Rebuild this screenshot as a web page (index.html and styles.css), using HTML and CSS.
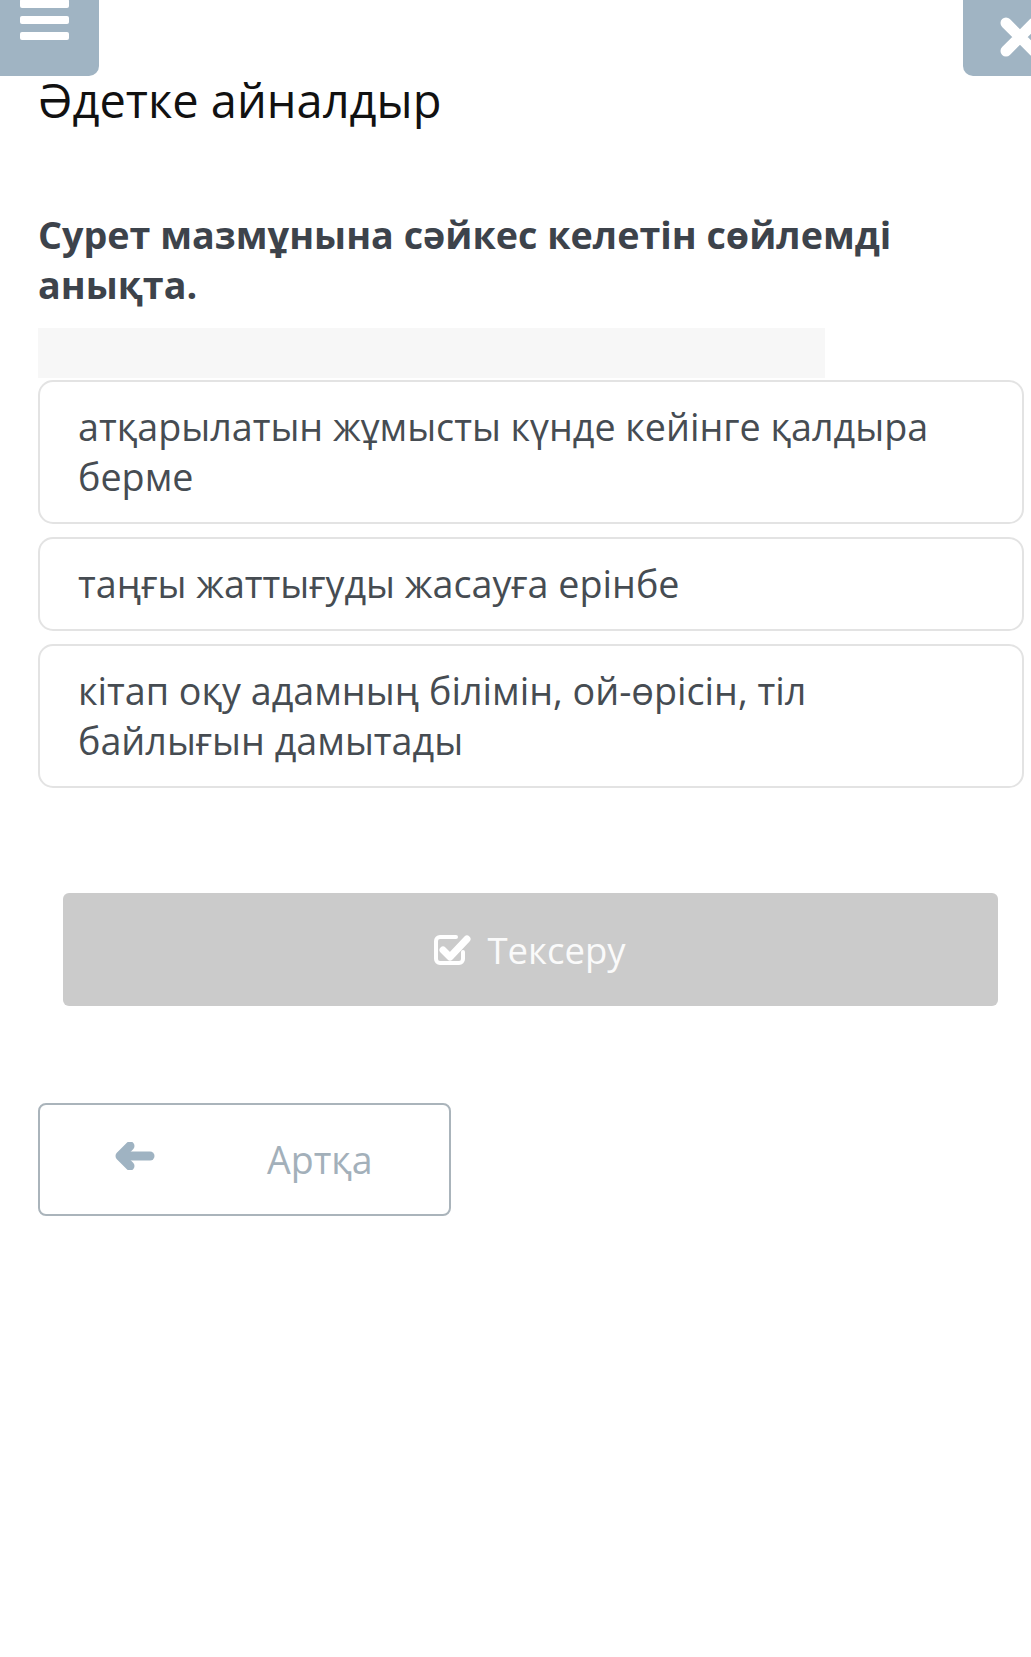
FILE: index.html
```html
<!DOCTYPE html>
<html>
<head>
  <meta charset="utf-8">
  <title>Әдетке айналдыр</title>
  <link rel="stylesheet" href="styles.css">
</head>
<body>
  <button class="menu-btn" aria-label="Мәзір">
    <span class="bar"></span>
    <span class="bar"></span>
    <span class="bar"></span>
  </button>
  <button class="close-btn" aria-label="Жабу">
    <svg width="44" height="44" viewBox="0 0 44 44">
      <path d="M8 7 L36 35 M8 35 L36 7" stroke="#fff" stroke-width="11" stroke-linecap="round"/>
    </svg>
  </button>

  <div class="page">
    <h1 class="title">Әдетке айналдыр</h1>

    <h2 class="question">Сурет мазмұнына сәйкес келетін сөйлемді анықта.</h2>

    <div class="placeholder"></div>

    <div class="options">
      <div class="option">атқарылатын жұмысты күнде кейінге қалдыра берме</div>
      <div class="option">таңғы жаттығуды жасауға ерінбе</div>
      <div class="option">кітап оқу адамның білімін, ой-өрісін, тіл байлығын дамытады</div>
    </div>

    <button class="check-btn">
      <svg width="38" height="34" viewBox="0 0 38 34">
        <path d="M30 19 v7 a4 4 0 0 1 -4 4 H7 a4 4 0 0 1 -4 -4 V8 a4 4 0 0 1 4 -4 h16" fill="none" stroke="#fff" stroke-width="4" stroke-linecap="round"/>
        <polyline points="10,17 17,24 34,6" fill="none" stroke="#fff" stroke-width="7" stroke-linecap="round" stroke-linejoin="round"/>
      </svg>
      <span>Тексеру</span>
    </button>

    <button class="back-btn">
      <svg width="40" height="28" viewBox="0 0 40 28">
        <polyline points="15,4 5,14 15,24" fill="none" stroke="#9fb3c2" stroke-width="9" stroke-linecap="round" stroke-linejoin="round"/>
        <line x1="6" y1="14" x2="35" y2="14" stroke="#9fb3c2" stroke-width="9" stroke-linecap="round"/>
      </svg>
      <span>Артқа</span>
    </button>
  </div>
</body>
</html>
```

FILE: styles.css
```css
* {
  box-sizing: border-box;
}
html, body {
  margin: 0;
  background: #fff;
  overflow-x: hidden;
}
body {
  font-family: "Open Sans", "Noto Sans", sans-serif;
  position: relative;
}
button {
  font-family: inherit;
  border: none;
  padding: 0;
  cursor: pointer;
}

/* floating nav buttons */
.menu-btn {
  position: absolute;
  top: 0;
  left: 0;
  width: 99px;
  height: 76px;
  background: #a0b4c3;
  border-radius: 0 0 10px 0;
  display: flex;
  flex-direction: column;
  align-items: flex-start;
  padding: 0 0 0 20px;
  gap: 8px;
}
.menu-btn .bar {
  display: block;
  width: 49px;
  height: 8px;
  background: #fff;
  border-radius: 2px;
}
.menu-btn .bar:first-child {
  height: 9px;
  margin-top: -1px;
}
.close-btn {
  position: absolute;
  top: 0;
  right: 0;
  width: 68px;
  height: 76px;
  background: #a0b4c3;
  border-radius: 0 0 0 10px;
  overflow: hidden;
  text-align: left;
}
.close-btn svg {
  display: block;
  margin: 0 0 0 35px;
}

.page {
  padding: 0 7px 0 38px;
}
.title {
  margin: 70px 0 0;
  font-size: 47px;
  line-height: 60px;
  font-weight: 400;
  color: #111;
}
.question {
  margin: 80px 0 0;
  font-size: 37.7px;
  line-height: 50px;
  font-weight: 700;
  color: #3d434b;
}
.placeholder {
  margin-top: 18px;
  width: 787px;
  height: 50px;
  background: #f7f7f7;
}
.options {
  margin-top: 2px;
  display: flex;
  flex-direction: column;
  gap: 13px;
}
.option {
  border: 2px solid #e3e3e3;
  border-radius: 15px;
  padding: 20px 38px;
  font-size: 37.7px;
  line-height: 50px;
  color: #464c52;
}

.check-btn {
  margin: 105px 26px 0 25px;
  width: calc(100% - 51px);
  height: 113px;
  background: #cbcbcb;
  border-radius: 6px;
  display: flex;
  align-items: center;
  justify-content: center;
  gap: 16px;
  color: #fafafa;
  font-size: 36.5px;
}
.check-btn svg {
  margin-left: -2px;
}

.back-btn {
  margin-top: 97px;
  width: 413px;
  height: 113px;
  background: #fff;
  border: 2px solid #aab4bb;
  border-radius: 8px;
  display: flex;
  align-items: center;
  padding-left: 75px;
  gap: 112px;
  color: #a3b0ba;
  font-size: 37.5px;
}
.back-btn svg {
  margin-top: -8px;
}
```
